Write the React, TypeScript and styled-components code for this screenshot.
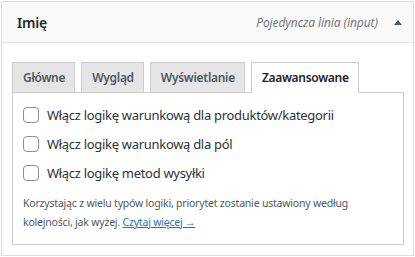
import React from 'react';
import styled, { createGlobalStyle } from 'styled-components';

const GlobalStyle = createGlobalStyle`
  body {
    margin: 0;
    background: #fff;
    font-family: "Noto Sans", "Open Sans", sans-serif;
    color: #3c434a;
  }
`;

const tabs = ['Główne', 'Wygląd', 'Wyświetlanie', 'Zaawansowane'];
const options = [
  'Włącz logikę warunkową dla produktów/kategorii',
  'Włącz logikę warunkową dla pól',
  'Włącz logikę metod wysyłki',
];

const App: React.FC = () => {
  return (
    <>
      <GlobalStyle />
      <Box>
        <Header>
          <Title>Imię</Title>
          <Meta>
            <Kind>Pojedyncza linia (input)</Kind>
            <Toggle />
          </Meta>
        </Header>
        <Body>
          <TabBar>
            {tabs.map((t) => (
              <Tab key={t} $active={t === 'Zaawansowane'}>{t}</Tab>
            ))}
          </TabBar>
          <Panel>
            {options.map((o) => (
              <Row key={o}>
                <Check type="checkbox" />
                <span>{o}</span>
              </Row>
            ))}
            <Note>
              Korzystając z wielu typów logiki, priorytet zostanie ustawiony według
              kolejności, jak wyżej. <a href="#">Czytaj więcej →</a>
            </Note>
          </Panel>
        </Body>
      </Box>
    </>
  );
};

export default App;

const Box = styled.div`
  margin: 1px;
  width: 413px;
  height: 255px;
  box-sizing: border-box;
  border: 1px solid #dcdcde;
  display: flex;
  flex-direction: column;
`;

const Header = styled.div`
  height: 41px;
  box-sizing: border-box;
  background: #f9f9f9;
  border-bottom: 1px solid #e2e4e7;
  display: flex;
  align-items: center;
  justify-content: space-between;
  padding: 0 11px 0 15px;
`;

const Title = styled.div`
  font-size: 14px;
  font-weight: 600;
  color: #23282d;
  letter-spacing: -0.2px;
`;

const Meta = styled.div`
  display: flex;
  align-items: center;
  gap: 16px;
`;

const Kind = styled.span`
  font-size: 12px;
  font-style: italic;
  color: #72777c;
  letter-spacing: -0.1px;
`;

const Toggle = styled.span`
  width: 0;
  height: 0;
  border-left: 4px solid transparent;
  border-right: 4px solid transparent;
  border-bottom: 5px solid #50575e;
`;

const Body = styled.div`
  flex: 1;
  padding: 19px 9px 10px 10px;
  display: flex;
  flex-direction: column;
`;

const TabBar = styled.div`
  display: flex;
  gap: 6px;
  margin-bottom: -1px;
  position: relative;
  z-index: 1;
`;

const Tab = styled.div<{ $active?: boolean }>`
  height: 31px;
  box-sizing: border-box;
  padding: 0 9px 0 10px;
  display: flex;
  align-items: center;
  font-size: 12px;
  font-weight: 600;
  letter-spacing: -0.3px;
  color: ${(p) => (p.$active ? '#1d2327' : '#50575e')};
  background: ${(p) => (p.$active ? '#fff' : '#e5e5e5')};
  border: 1px solid #ccc;
  border-bottom-color: ${(p) => (p.$active ? '#fff' : '#ccc')};
`;

const Panel = styled.div`
  flex: 1;
  border: 1px solid #ccc;
  padding: 7px 10px 0 10px;
  display: flex;
  flex-direction: column;
`;

const Row = styled.label`
  height: 29px;
  display: flex;
  align-items: center;
  gap: 8px;
  font-size: 13px;
  letter-spacing: -0.3px;
  color: #2c3338;
`;

const Check = styled.input`
  appearance: none;
  margin: 0;
  width: 16px;
  height: 16px;
  border: 1px solid #8c8f94;
  border-radius: 4px;
  background: #fff;
`;

const Note = styled.p`
  margin: 7px 0 0 0;
  font-size: 10.5px;
  line-height: 19px;
  letter-spacing: -0.2px;
  color: #50575e;

  a {
    color: #2271b1;
  }
`;
